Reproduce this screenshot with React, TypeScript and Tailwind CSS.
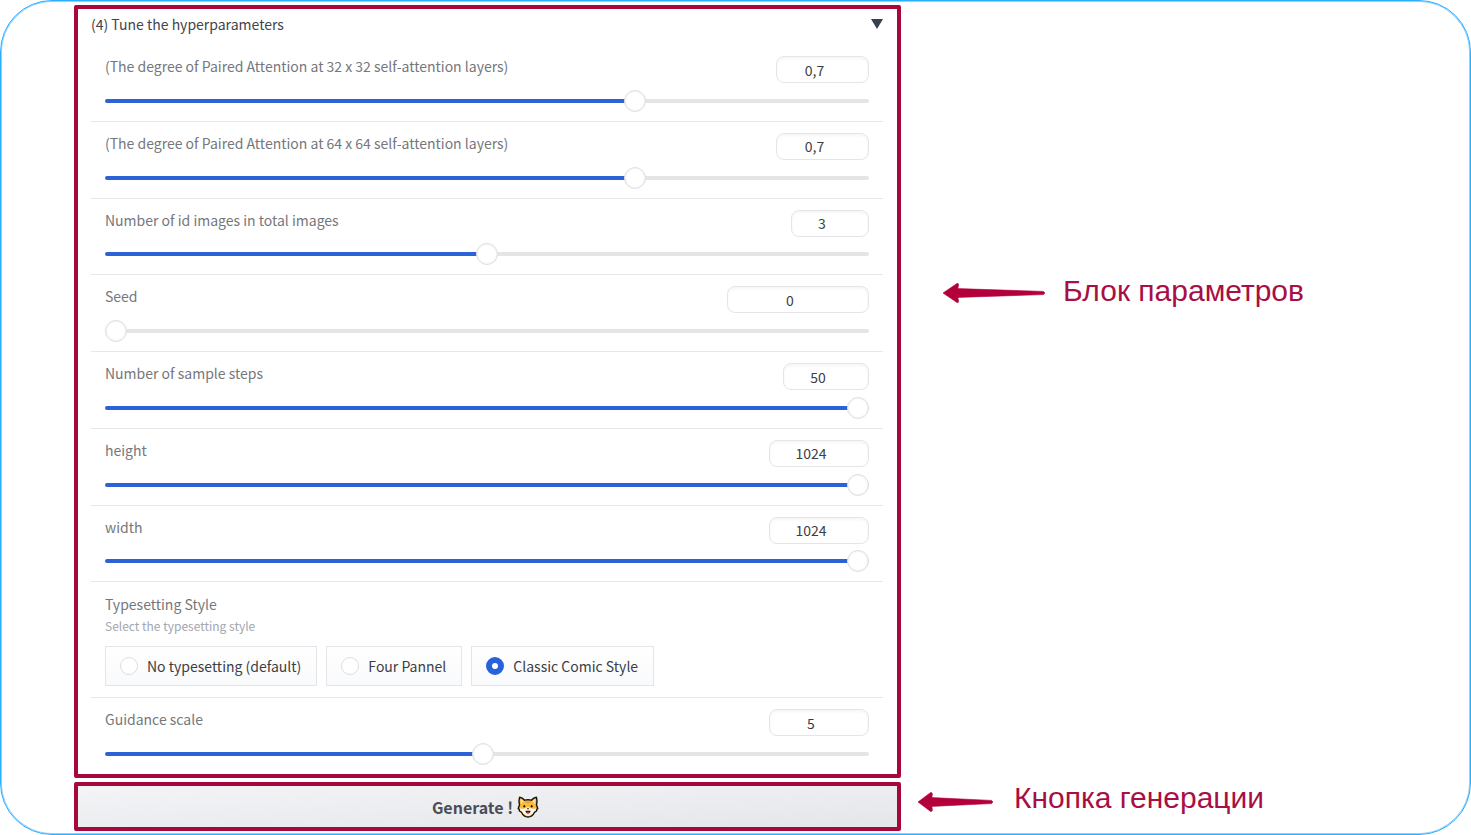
import { useState } from "react";
import type { CSSProperties } from "react";

type SliderField = {
  id: string;
  label: string;
  value: number;
  min: number;
  max: number;
  step: number;
  box: string;
};

const topFields: SliderField[] = [
  { id: "sa32", label: "(The degree of Paired Attention at 32 x 32 self-attention layers)", value: 0.7, min: 0, max: 1, step: 0.1, box: "w-[93px]" },
  { id: "sa64", label: "(The degree of Paired Attention at 64 x 64 self-attention layers)", value: 0.7, min: 0, max: 1, step: 0.1, box: "w-[93px]" },
  { id: "ids", label: "Number of id images in total images", value: 3, min: 1, max: 5, step: 1, box: "w-[78px]" },
  { id: "seed", label: "Seed", value: 0, min: 0, max: 2147483647, step: 1, box: "w-[142px]" },
  { id: "steps", label: "Number of sample steps", value: 50, min: 20, max: 50, step: 1, box: "w-[86px]" },
  { id: "height", label: "height", value: 1024, min: 256, max: 1024, step: 32, box: "w-[100px]" },
  { id: "width", label: "width", value: 1024, min: 256, max: 1024, step: 32, box: "w-[100px]" },
];

const guidance: SliderField = {
  id: "guidance", label: "Guidance scale", value: 5, min: 0.1, max: 10, step: 0.1, box: "w-[100px]",
};

const styles = ["No typesetting (default)", "Four Pannel", "Classic Comic Style"];

function SliderRow({ field }: { field: SliderField }) {
  const [value, setValue] = useState(field.value);
  const fill = ((value - field.min) / (field.max - field.min)) * 100;
  return (
    <div className="flex grow flex-col justify-between border-b border-[#e6e7ea] px-[14px] pt-[11px] pb-[9px] last:border-b-0">
      <div className="flex items-start justify-between">
        <label htmlFor={field.id} className="text-[14px] leading-5 text-[#75777d]">
          {field.label}
        </label>
        <input
          type="text"
          inputMode="decimal"
          aria-label={`${field.label} value`}
          value={String(value).replace(".", ",")}
          onChange={(e) => {
            const next = Number(e.target.value.replace(",", "."));
            if (!Number.isNaN(next)) setValue(next);
          }}
          className={`${field.box} h-[27px] rounded-lg border border-[#e5e5e8] bg-white pr-4 text-center text-[14px] leading-5 text-[#3c3e45] shadow-[inset_0_2px_3px_0_rgba(0,0,0,0.04)] outline-none`}
        />
      </div>
      <input
        id={field.id}
        type="range"
        min={field.min}
        max={field.max}
        step={field.step}
        value={value}
        onChange={(e) => setValue(Number(e.target.value))}
        style={{ "--fill": `${fill}%` } as CSSProperties}
        className="block h-[22px] w-full cursor-pointer appearance-none bg-transparent [&::-webkit-slider-runnable-track]:h-1 [&::-webkit-slider-runnable-track]:rounded-full [&::-webkit-slider-runnable-track]:bg-[linear-gradient(to_right,#2b62d6_var(--fill),#e5e5e7_var(--fill))] [&::-webkit-slider-thumb]:mt-[-9px] [&::-webkit-slider-thumb]:size-[22px] [&::-webkit-slider-thumb]:appearance-none [&::-webkit-slider-thumb]:rounded-full [&::-webkit-slider-thumb]:border [&::-webkit-slider-thumb]:border-[#dedfe2] [&::-webkit-slider-thumb]:bg-white [&::-webkit-slider-thumb]:shadow-[inset_0_0_2px_rgba(0,0,0,0.12)]"
      />
    </div>
  );
}

function CatFace() {
  return (
    <svg viewBox="0 0 22 22" className="size-[22px]" aria-hidden="true">
      <path
        d="M2.6 1.2 C4.4 1.4 6.3 2.6 7.6 4.2 C9.7 3.6 12.3 3.6 14.4 4.2 C15.7 2.6 17.6 1.4 19.4 1.2 C20.2 3.6 20.2 6.6 19.5 9 L20.8 12.6 L19.6 13.4 L19.6 15 L17.6 16.2 C16.2 19 14 21 11 21 C8 21 5.8 19 4.4 16.2 L2.4 15 L2.4 13.4 L1.2 12.6 L2.5 9 C1.8 6.6 1.8 3.6 2.6 1.2 Z"
        fill="#f9bd3c"
        stroke="#17120d"
        strokeWidth="1.4"
        strokeLinejoin="round"
      />
      <path d="M3.8 3 L6.4 5.2 L4 7.8 Z M18.2 3 L15.6 5.2 L18 7.8 Z" fill="#fbe3c4" />
      <path d="M2.3 12.4 L6.2 12.8 C8 13 9.6 11.2 11 11.2 C12.4 11.2 14 13 15.8 12.8 L19.7 12.4 L18.8 13.2 L18.8 14.6 L17 15.6 C15.4 18.4 13.6 20 11 20 C8.4 20 6.6 18.4 5 15.6 L3.2 14.6 L3.2 13.2 Z" fill="#fff6ea" />
      <path d="M9.2 4.8 V7 M11 4.6 V7.6 M12.8 4.8 V7" stroke="#d98d28" strokeWidth="0.8" />
      <ellipse cx="7.3" cy="10.3" rx="0.9" ry="1.3" fill="#17120d" />
      <ellipse cx="14.7" cy="10.3" rx="0.9" ry="1.3" fill="#17120d" />
      <path d="M9.8 12.3 H12.2 L11 13.7 Z" fill="#17120d" />
      <path d="M8.4 14.8 H13.6 C13.4 16.7 12.4 17.6 11 17.6 C9.6 17.6 8.6 16.7 8.4 14.8 Z" fill="#4a1111" />
      <path d="M9.6 16.6 C10.4 16 11.6 16 12.4 16.6 C12 17.3 10 17.3 9.6 16.6 Z" fill="#ef5a4c" />
    </svg>
  );
}

function LongArrow() {
  return (
    <svg viewBox="0 0 104 22" className="h-[22px] w-[104px] shrink-0" aria-hidden="true">
      <path d="M1 11 L15 1.4 Q16.6 1 16.6 3 L15.8 6.6 L101.5 9.4 Q104 11 101.5 12.6 L15.8 15.4 L16.6 19 Q16.6 21 15 20.6 Z" fill="#b3003b" stroke="#b3003b" strokeWidth="0.6" strokeLinejoin="round" />
    </svg>
  );
}

function ShortArrow() {
  return (
    <svg viewBox="0 0 77 22" className="h-[22px] w-[77px] shrink-0" aria-hidden="true">
      <path d="M1 11 L13.6 1.6 Q15.4 1.2 15.4 3.2 L14.8 6.6 L74.5 9.4 Q77 11 74.5 12.6 L14.8 15.4 L15.4 18.8 Q15.4 20.8 13.6 20.4 Z" fill="#b3003b" stroke="#b3003b" strokeWidth="0.6" strokeLinejoin="round" />
    </svg>
  );
}

export default function App() {
  const [style, setStyle] = useState(styles[2]);
  const [open, setOpen] = useState(true);
  return (
    <main className="grid min-h-screen grid-cols-[827fr_569fr] grid-rows-[1fr_49px] gap-y-1 rounded-[52px] border border-[#27aeff] bg-white pt-1 pb-[3px] pl-[73px] font-['Noto_Sans_CJK_SC',sans-serif] shadow-[inset_0_0_0_1px_#8fd4ff]">
      <section className="flex flex-col rounded-xs border-4 border-[#a6083c] pr-[14px] pl-[13px]">
        <button
          type="button"
          aria-expanded={open}
          onClick={() => setOpen(!open)}
          className="mb-1.5 flex h-[30px] items-center justify-between text-left text-[14px] leading-5 text-[#41444d]"
        >
          <span>(4) Tune the hyperparameters</span>
          <svg viewBox="0 0 12 10" className="h-[10px] w-3" aria-hidden="true">
            <path d="M0 0 H12 L6 10 Z" fill="#374151" />
          </svg>
        </button>
        {open && (
          <div className="flex grow flex-col">
            {topFields.map((field) => (
              <SliderRow key={field.id} field={field} />
            ))}
            <fieldset className="border-b border-[#e6e7ea] px-[14px] pt-3 pb-[11px]">
              <legend className="float-left w-full text-[14px] leading-5 text-[#75777d]">Typesetting Style</legend>
              <p className="clear-both text-[12px] leading-6 text-[#a3a6b0]">Select the typesetting style</p>
              <div className="mt-2 flex gap-[9px]">
                {styles.map((name) => (
                  <label
                    key={name}
                    className="flex h-10 items-center gap-[9px] border border-[#e3e5ea] bg-linear-to-b from-white to-[#f9fafb] pr-[15px] pl-[14px] text-[14px] leading-5 text-[#3c3e45]"
                  >
                    <input
                      type="radio"
                      name="typesetting"
                      checked={style === name}
                      onChange={() => setStyle(name)}
                      className="size-[18px] appearance-none rounded-full border border-[#dcdee3] bg-white checked:border-[6px] checked:border-[#2960dc]"
                    />
                    {name}
                  </label>
                ))}
              </div>
            </fieldset>
            <SliderRow field={guidance} />
          </div>
        )}
      </section>
      <aside className="flex items-start gap-[17px] pt-[268px] pl-[41px] font-['Liberation_Sans',sans-serif] text-[#a80f45]">
        <div className="flex h-10 items-center">
          <LongArrow />
        </div>
        <p className="text-[30px] leading-9">Блок параметров</p>
      </aside>
      <button
        type="button"
        className="flex items-center justify-center gap-1 rounded-xs border-4 border-[#a6083c] bg-linear-to-br from-[#f3f4f6] to-[#e5e6ea] pr-1 text-[16px] leading-6 font-bold text-[#4a4d57]"
      >
        Generate !
        <CatFace />
      </button>
      <aside className="flex items-start gap-5 pl-4 font-['Liberation_Sans',sans-serif] text-[#a80f45]">
        <div className="flex h-10 items-center">
          <ShortArrow />
        </div>
        <p className="text-[30px] leading-8">Кнопка генерации</p>
      </aside>
    </main>
  );
}
